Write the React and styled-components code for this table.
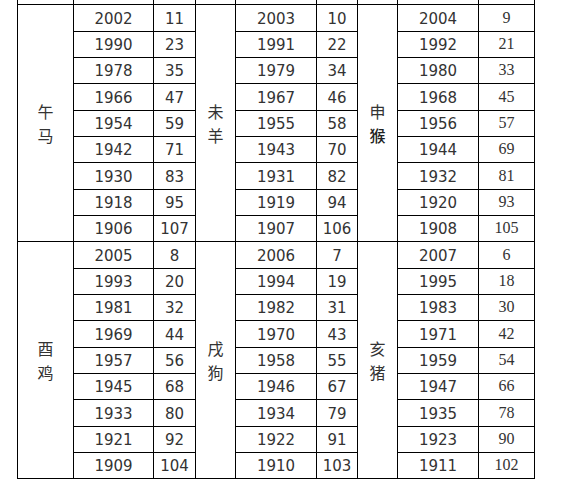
import React from 'react';
import styled, { createGlobalStyle } from 'styled-components';

const GlobalStyle = createGlobalStyle`
    html, body {
        margin: 0;
        padding: 0;
        background: #fff;
    }
`;

const Page = styled.div`
    width: 571px;
    height: 482px;
    overflow: hidden;
    padding-left: 17px;
    box-sizing: border-box;
`;

const Table = styled.table`
    border-collapse: collapse;
    table-layout: fixed;
    width: 518px;
    border: none;
    color: #333;
`;

const Row = styled.tr`
    height: ${(props) => props.$h || 26}px;
`;

const Cell = styled.td`
    border: 1px solid #000;
    padding: ${(props) => (props.$serif ? 0 : 3)}px 0 0;
    text-align: center;
    vertical-align: middle;
    font-family: ${(props) =>
        props.$serif ? '"Liberation Serif", serif' : '"DejaVu Sans", Verdana, sans-serif'};
    font-size: ${(props) => (props.$serif ? 16 : 15)}px;
    line-height: 1;
    ${(props) => props.$tail && 'border-top: none; padding: 0;'}
`;

const AnimalCell = styled.td`
    border: 1px solid #000;
    padding: 0;
    text-align: center;
    vertical-align: middle;
`;

const AnimalLabel = styled.div`
    display: flex;
    flex-direction: column;
    align-items: center;
    gap: 6px;
    font-family: "Noto Sans CJK SC", sans-serif;
    font-size: 16px;
    line-height: 18px;
    color: #333;
`;

const Char = styled.span`
    font-weight: ${(props) => (props.$heavy ? 500 : 400)};
    color: ${(props) => (props.$heavy ? '#222' : '#333')};
`;

const widths = [56, 80, 42, 40, 81, 41, 40, 81, 56];

const groups = [
    [
        { name: ['午', '马'], year: 2002, age: 11 },
        { name: ['未', '羊'], year: 2003, age: 10 },
        { name: ['申', '猴'], year: 2004, age: 9, heavy: true },
    ],
    [
        { name: ['酉', '鸡'], year: 2005, age: 8 },
        { name: ['戌', '狗'], year: 2006, age: 7 },
        { name: ['亥', '猪'], year: 2007, age: 6 },
    ],
];

const rows = [0, 1, 2, 3, 4, 5, 6, 7, 8];

const Animal = ({ item }) => (
    <AnimalCell rowSpan={9}>
        <AnimalLabel>
            <Char>{item.name[0]}</Char>
            <Char $heavy={item.heavy}>{item.name[1]}</Char>
        </AnimalLabel>
    </AnimalCell>
);

const App = () => {
    return (
        <Page>
            <GlobalStyle />
            <Table>
                <colgroup>
                    {widths.map((w, i) => (
                        <col key={i} style={{ width: w }} />
                    ))}
                </colgroup>
                <tbody>
                    <Row $h={4}>
                        {widths.map((w, i) => (
                            <Cell key={i} $tail />
                        ))}
                    </Row>
                    {groups.map((group, g) =>
                        rows.map((r) => (
                            <Row key={g + '-' + r} $h={r % 3 === 0 ? 27 : 26}>
                                {group.map((item, k) => (
                                    <React.Fragment key={k}>
                                        {r === 0 && <Animal item={item} />}
                                        <Cell>{item.year - 12 * r}</Cell>
                                        <Cell $serif={k === 2}>{item.age + 12 * r}</Cell>
                                    </React.Fragment>
                                ))}
                            </Row>
                        ))
                    )}
                </tbody>
            </Table>
        </Page>
    );
};

export default App;
